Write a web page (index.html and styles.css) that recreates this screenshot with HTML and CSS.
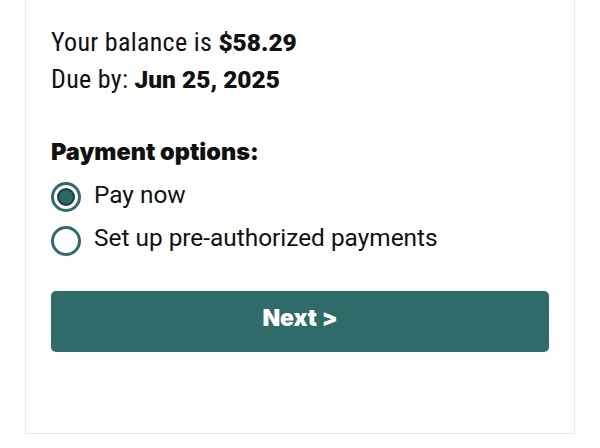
FILE: index.html
```html
<!DOCTYPE html>
<html>
<head>
<meta charset="utf-8">
<link rel="stylesheet" href="styles.css">
</head>
<body>
<div class="card">
  <p class="line">Your balance is <strong>$58.29</strong></p>
  <p class="line">Due by: <strong>Jun 25, 2025</strong></p>
  <h2 class="heading">Payment options:</h2>
  <div class="options">
    <label class="option"><span class="radio checked"><span class="dot"></span></span><span class="label">Pay now</span></label>
    <label class="option"><span class="radio"></span><span class="label">Set up pre-authorized payments</span></label>
  </div>
  <button class="next">Next &gt;</button>
</div>
</body>
</html>
```
FILE: styles.css
```css
html, body {
  margin: 0;
  padding: 0;
  background: #fff;
}
body {
  font-family: Roboto, "Liberation Sans", sans-serif;
  color: #111;
}
.card {
  box-sizing: border-box;
  margin-left: 25px;
  width: 550px;
  height: 434px;
  border: 1px solid #e8e8e8;
  border-top: none;
  padding: 24px 25px 0 25px;
}
.line {
  margin: 0;
  font-size: 26px;
  font-stretch: 80%;
  letter-spacing: 0.3px;
  line-height: 37px;
}
.line strong {
  font-size: 24.5px;
  font-weight: 900;
  font-stretch: 88%;
  letter-spacing: 0;
  line-height: 1;
}
.heading {
  margin: 36px 0 0 0;
  font-family: Inter, Roboto, sans-serif;
  font-size: 23.5px;
  line-height: 36px;
  font-weight: 900;
}
.options {
  display: flex;
  flex-direction: column;
  gap: 13.5px;
  margin-top: 12px;
}
.option {
  display: flex;
  align-items: center;
  gap: 13px;
  height: 30px;
}
.radio {
  box-sizing: border-box;
  width: 30px;
  height: 30px;
  border-radius: 50%;
  border: 3px solid #2e6b69;
  display: flex;
  align-items: center;
  justify-content: center;
  flex: none;
}
.dot {
  box-sizing: border-box;
  width: 18px;
  height: 18px;
  border-radius: 50%;
  background: #2b6764;
  border: 2px solid #1b3b3a;
}
.label {
  font-size: 24.4px;
  padding-bottom: 6px;
}
.next {
  box-sizing: border-box;
  display: block;
  margin-top: 35px;
  width: 498px;
  height: 61px;
  padding: 0 0 6px 0;
  border: none;
  border-radius: 5px;
  background: #2e6b69;
  color: #fff;
  font-family: Inter, Roboto, sans-serif;
  font-size: 23px;
  font-weight: 900;
}
```
